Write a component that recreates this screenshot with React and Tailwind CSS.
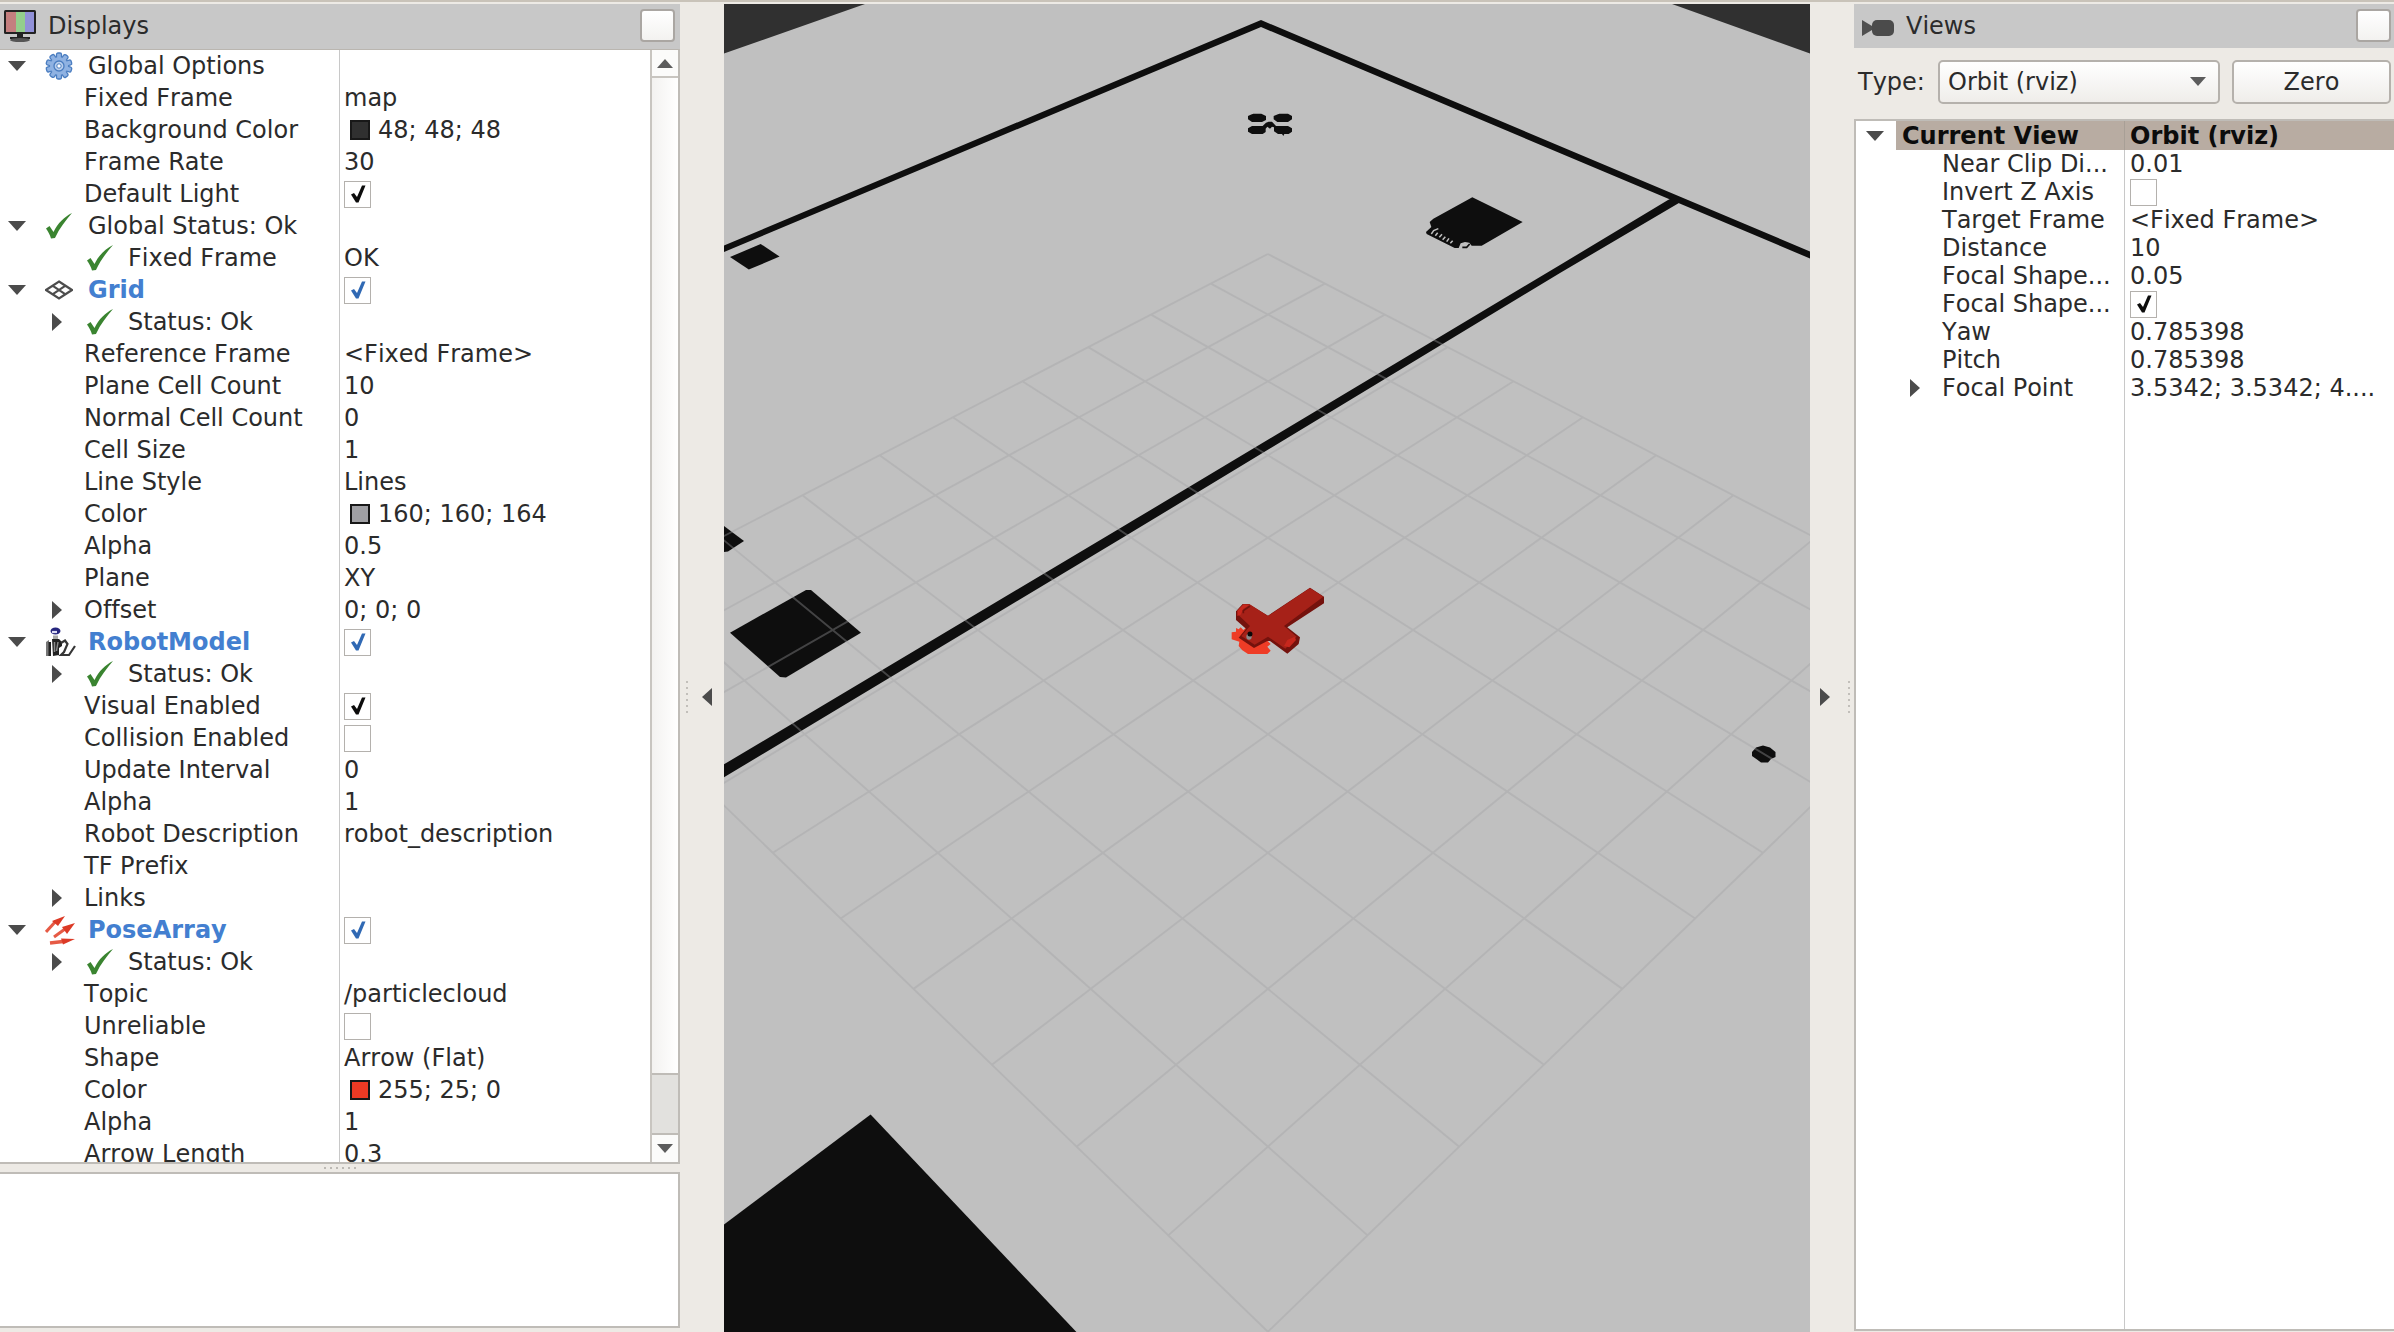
import React from "react";

const CX = 1267.9;
function project(i, j) {
  const s = (i + j) / 2;
  const w = 1 - 0.046416 * s;
  return [CX + (55.7 * (i - j)) / w, (254 + 45.96 * s) / w];
}

const steps = Array.from({ length: 11 }, (_, n) => n);

function GridLines() {
  const d = steps
    .map((n) => {
      const [ax, ay] = project(n, 0);
      const [bx, by] = project(n, 10);
      const [cx, cy] = project(0, n);
      const [dx, dy] = project(10, n);
      return `M${ax} ${ay}L${bx} ${by}M${cx} ${cy}L${dx} ${dy}`;
    })
    .join("");
  return <path d={d} fill="none" stroke="#a0a0a4" strokeOpacity="0.37" strokeWidth="1.9" />;
}

function Scene() {
  return (
    <svg className="block h-[1328px] w-[1086px] shrink-0 bg-[#c0c0c0]" viewBox="724 4 1086 1328">
      <path d="M724 4H865L724 53.5ZM1672 4H1810V53.5Z" fill="#303030" />
      <g fill="#0e0e0e">
        <path d="M1261 20L724 245.5V252L1261 27L1810 258.5V251.5Z" />
        <path d="M1668 200L1560 265L1120 528.3L724 764.3V777.3L1120 539.3L1560 273L1684 200L1676 196Z" />
        <path d="M730 257L760.7 244L779.6 256.6L748.8 269.5Z" />
        <path d="M724 526L744 541L728 551.5L724 552Z" />
        <path d="M730 632.7L806 590L811 590L861 632.7L786 677.5L780 677Z" />
        <path d="M870.6 1114.6L724 1224.6V1332H1076.4Z" />
        <path d="M1752 752L1756 747.500L1763 745.500L1770 747.500L1775.500 752V757L1771 759L1768 762.500H1761L1757 759.500L1752 756Z" />
      </g>
      <g transform="translate(1220 80) scale(.33333)">
        <g fill="#0e0e0e">
          <path d="M92 104L100 101H124L138 108V120L126 126H96L84 118V108ZM170 104L178 101H204L216 108V118L204 126H172L161 118V108Z" />
          <path d="M84 145L96 138H128L138 128L146 125H156L168 138H204L216 145V155L206 162H193L190 168L186 162H174L162 154V142L156 140L150 146L142 140L137 146V156L128 162H96L84 155Z" />
          <path d="M757 352L908 426L785 497H755L748 488L735 486L722 490L716 504H704L620 462L618 456L634 441L629 426L640 416Z" />
        </g>
        <path d="M634 462L641 452L655 446M646 467L653 458M658 472L666 463M668 479L676 470M680 485L687 475M691 490L698 482" fill="none" stroke="#c0c0c0" strokeWidth="4.500" />
        <path d="M727 502H740L749 492" fill="none" stroke="#0e0e0e" strokeWidth="5" />
      </g>
      <GridLines />
      <g transform="translate(1180 540) scale(.33333)">
        <path d="M155 277L168 275V264L176 268L182 262L190 270L200 262L230 270L272 312L262 320L272 332L262 342H204L186 330L176 318L178 305L155 298Z" fill="#ee3c26" />
        <path d="M168 214L188 192H206L264 227L390 143L432 170V190L322 262L360 292L356 312L322 341L270 303H262L222 324L176 293L198 266L168 240Z" fill="#74120d" />
        <path d="M172 212L190 192H208L264 228L390 144L430 170L312 258L350 290L316 326L264 290L224 314L184 288L210 258L176 226Z" fill="#a62118" />
        <path d="M172 228V212L190 194L208 196L190 206L182 224Z" fill="#c6271d" />
        <path d="M190 220V212L210 198" fill="none" stroke="#74120d" strokeWidth="5" />
        <path d="M312 318L322 300L344 290L348 300L328 322Z" fill="#c6271d" />
        <ellipse cx="207" cy="290" rx="8" ry="9" fill="#8a8a8a" />
        <circle cx="210" cy="282" r="7.5" fill="#080808" />
      </g>
    </svg>
  );
}

function DownArrow() {
  return (
    <svg className="h-[10px] w-[18px]" viewBox="0 0 18 10">
      <path d="M0 0H18L9 10Z" fill="#4b4b4b" />
    </svg>
  );
}

function RightArrow() {
  return (
    <svg className="h-[18px] w-[10px]" viewBox="0 0 10 18">
      <path d="M0 0V18L10 9Z" fill="#4b4b4b" />
    </svg>
  );
}

function OkIcon() {
  return (
    <svg className="h-[28px] w-[28px]" viewBox="0 0 28 28">
      <path d="M1 16.500L4.500 14L8.500 20C13 11 19 5 27 1C21 8 14.500 16 10 26L6 26.500C5 23 3 19 1 16.500Z" fill="#3a8430" />
    </svg>
  );
}

const teeth = Array.from({ length: 10 }, (_, n) => n * 36);

function GearIcon() {
  return (
    <svg className="h-[28px] w-[28px]" viewBox="0 0 28 28">
      {teeth.map((a) => (
        <rect key={a} x="11.500" y="1" width="5" height="6" rx="1.500" fill="#8fb2e2" stroke="#4a7dc0" strokeWidth="1.300" transform={`rotate(${a} 14 14)`} />
      ))}
      <circle cx="14" cy="14" r="9" fill="#8fb2e2" />
      <circle cx="14" cy="14" r="5" fill="#b9cfed" stroke="#4a7dc0" strokeWidth="1.300" />
      <circle cx="14" cy="14" r="2.200" fill="#fff" stroke="#4a7dc0" strokeWidth="1" />
    </svg>
  );
}

function GridIcon() {
  return (
    <svg className="h-[28px] w-[28px]" viewBox="0 0 28 28">
      <path d="M14 5.500L27 14L14 22.500L1 14ZM7.500 9.700L20.500 18.300M20.500 9.700L7.500 18.300" fill="none" stroke="#4d4d4d" strokeWidth="2.200" />
    </svg>
  );
}

function RobotIcon() {
  return (
    <svg className="h-[31px] w-[31px]" viewBox="0 0 31 31">
      <ellipse cx="10.500" cy="4" rx="5" ry="3.500" fill="#26267e" />
      <path d="M7 5H12" stroke="#dcdcf4" strokeWidth="2.200" />
      <path d="M8 8.500H13V13H8Z" fill="#a8a8a8" />
      <path d="M1 15L4 13V29H1Z" fill="#777" />
      <path d="M3.500 15H6V29H3.500ZM7 12H14L17 15V19L14 21V28L8 29Z" fill="#222" />
      <path d="M9.500 15V25M13 15L11.500 24" stroke="#8a8a8a" strokeWidth="1.500" />
      <path d="M16 16L20 13.500L22.500 17L19 25L16 28H24L30 19" fill="none" stroke="#363636" strokeWidth="2.200" />
    </svg>
  );
}

function PoseIcon() {
  return (
    <svg className="h-[31px] w-[31px]" viewBox="0 0 31 31">
      <path d="M1 17L11 6" stroke="#e65a45" strokeWidth="3" />
      <path d="M7 6L20 1L13 11Z" fill="#dc3a26" />
      <path d="M9 22L20 14" stroke="#e65a45" strokeWidth="3" />
      <path d="M17 12L30 8L22 19Z" fill="#dc3a26" />
      <path d="M5 28L18 26.500" stroke="#e65a45" strokeWidth="3.500" />
      <path d="M16 23.500L30 24L18 29.500Z" fill="#dc3a26" />
    </svg>
  );
}

function MonitorIcon() {
  return (
    <svg className="h-[34px] w-[32px]" viewBox="0 0 32 34">
      <rect x="0" y="1" width="32" height="24" rx="1.500" fill="#222" />
      <path d="M2 3H12V23H2Z" fill="#c47f7f" />
      <path d="M12 3H21V23H12Z" fill="#93cf8c" />
      <path d="M21 3H30V23H21Z" fill="#9191d8" />
      <path d="M13 25H19V28H26V30H6V28H13Z" fill="#222" />
      <ellipse cx="16" cy="31" rx="10" ry="2" fill="#555" />
    </svg>
  );
}

function CameraIcon() {
  return (
    <svg className="h-[18px] w-[33px]" viewBox="0 0 33 18">
      <path d="M0 1L10 7V11L0 17Z" fill="#4f4f4f" />
      <rect x="10" y="1" width="22" height="16" rx="5" fill="#4b4b4b" />
    </svg>
  );
}

function Check({ on, blue }) {
  return (
    <span className="flex size-[27px] shrink-0 items-center justify-center border-[1.5px] border-[#b4b1ad] bg-white">
      {on && (
        <svg className="size-[20px]" viewBox="0 0 20 20">
          <path d="M3 10.500L6 9L9 13L14 1.500H17.500L10.500 18.500H8Z" fill={blue ? "#3069b4" : "#0c0c0c"} />
        </svg>
      )}
    </span>
  );
}

const icons = { gear: GearIcon, ok: OkIcon, grid: GridIcon, robot: RobotIcon, pose: PoseIcon };

const rows = [
  { k: "top", icon: "gear", label: "Global Options" },
  { label: "Fixed Frame", value: "map" },
  { label: "Background Color", swatch: "bg-[#303030]", value: "48; 48; 48" },
  { label: "Frame Rate", value: "30" },
  { label: "Default Light", check: true },
  { k: "top", icon: "ok", label: "Global Status: Ok" },
  { k: "status", label: "Fixed Frame", value: "OK" },
  { k: "top", icon: "grid", label: "Grid", blue: true, check: true },
  { k: "status", arrow: true, label: "Status: Ok" },
  { label: "Reference Frame", value: "<Fixed Frame>" },
  { label: "Plane Cell Count", value: "10" },
  { label: "Normal Cell Count", value: "0" },
  { label: "Cell Size", value: "1" },
  { label: "Line Style", value: "Lines" },
  { label: "Color", swatch: "bg-[#a0a0a4]", value: "160; 160; 164" },
  { label: "Alpha", value: "0.5" },
  { label: "Plane", value: "XY" },
  { arrow: true, label: "Offset", value: "0; 0; 0" },
  { k: "top", icon: "robot", label: "RobotModel", blue: true, check: true },
  { k: "status", arrow: true, label: "Status: Ok" },
  { label: "Visual Enabled", check: true },
  { label: "Collision Enabled", check: false },
  { label: "Update Interval", value: "0" },
  { label: "Alpha", value: "1" },
  { label: "Robot Description", value: "robot_description" },
  { label: "TF Prefix" },
  { arrow: true, label: "Links" },
  { k: "top", icon: "pose", label: "PoseArray", blue: true, check: true },
  { k: "status", arrow: true, label: "Status: Ok" },
  { label: "Topic", value: "/particlecloud" },
  { label: "Unreliable", check: false },
  { label: "Shape", value: "Arrow (Flat)" },
  { label: "Color", swatch: "bg-[#ee3a24]", value: "255; 25; 0" },
  { label: "Alpha", value: "1" },
  { label: "Arrow Length", value: "0.3" },
];

function DisplayRow({ row }) {
  const Icon = icons[row.icon];
  return (
    <div className="flex h-8 shrink-0 items-center">
      <div className="flex h-full w-[340px] shrink-0 items-center border-r border-[#c8c8c8]">
        {row.k === "top" ? (
          <>
            <span className="flex w-[45px] shrink-0 pl-2"><DownArrow /></span>
            <span className="flex w-[43px] shrink-0"><Icon /></span>
          </>
        ) : (
          <>
            <span className="flex w-[84px] shrink-0 pl-[52px]">{row.arrow && <RightArrow />}</span>
            {row.k === "status" && <span className="flex w-[44px] shrink-0 pl-[2px]"><OkIcon /></span>}
          </>
        )}
        <span className={row.blue ? "font-bold text-[#437fd0]" : ""}>{row.label}</span>
      </div>
      <div className="flex items-center pl-1">
        {row.swatch && <span className={`mr-2 ml-[6px] size-5 border-2 border-[#181818] ${row.swatch}`} />}
        {row.check !== undefined && <Check on={row.check} blue={row.blue} />}
        {row.value}
      </div>
    </div>
  );
}

function FloatButton() {
  return <span className="mb-[2px] h-[33px] w-[35px] rounded-[4px] border-2 border-[#aaa6a2] bg-linear-to-b from-white to-[#f3f2f0]" />;
}

function Displays() {
  return (
    <div className="flex w-[680px] shrink-0 flex-col">
      <div className="flex h-[45px] shrink-0 items-center bg-[#c8c8c8] pr-[5px] pl-1">
        <span className="mb-[2px]"><MonitorIcon /></span>
        <span className="mb-[2px] ml-[12px] flex-1">Displays</span>
        <FloatButton />
      </div>
      <div className="flex h-[1115px] shrink-0 overflow-hidden border-t border-r-2 border-b-2 border-t-[#bab6b0] border-r-[#bfbcb7] border-b-[#bfbcb7] bg-white">
        <div className="flex flex-1 flex-col overflow-hidden">
          {rows.map((row, n) => <DisplayRow key={n} row={row} />)}
        </div>
        <div className="flex w-[28px] shrink-0 flex-col border-l-2 border-[#c8c5c0] bg-linear-to-r from-[#f3f2f0] to-white">
          <div className="flex h-[28px] items-center justify-center border-b-2 border-[#c8c5c0] bg-[#fbfbfa]">
            <svg className="h-[9px] w-4" viewBox="0 0 16 9"><path d="M0 9H16L8 0Z" fill="#5c5c5c" /></svg>
          </div>
          <div className="flex-1" />
          <div className="h-[62px] border-y-2 border-[#bfbcb7] bg-[#e2e1de]" />
          <div className="flex h-[27px] items-center justify-center bg-[#fbfbfa]">
            <svg className="h-[9px] w-4" viewBox="0 0 16 9"><path d="M0 0H16L8 9Z" fill="#5c5c5c" /></svg>
          </div>
        </div>
      </div>
      <div className="flex h-[8px] shrink-0 items-center justify-center gap-1">
        {[0, 1, 2, 3, 4, 5].map((n) => <span key={n} className="size-[2px] bg-[#bcb9b4]" />)}
      </div>
      <div className="h-[156px] shrink-0 border-2 border-l-0 border-[#bfbcb7] bg-white" />
    </div>
  );
}

function Dots() {
  return (
    <div className="flex flex-col gap-1">
      {[0, 1, 2, 3, 4, 5].map((n) => <span key={n} className="size-[2px] bg-[#c2bfba]" />)}
    </div>
  );
}

const viewRows = [
  { label: "Near Clip Di...", value: "0.01" },
  { label: "Invert Z Axis", check: false },
  { label: "Target Frame", value: "<Fixed Frame>" },
  { label: "Distance", value: "10" },
  { label: "Focal Shape...", value: "0.05" },
  { label: "Focal Shape...", check: true },
  { label: "Yaw", value: "0.785398" },
  { label: "Pitch", value: "0.785398" },
  { arrow: true, label: "Focal Point", value: "3.5342; 3.5342; 4...." },
];

function Views() {
  return (
    <div className="flex w-[540px] shrink-0 flex-col">
      <div className="flex h-[44px] shrink-0 items-center bg-[#c8c8c8] pr-[3px] pl-2">
        <span className="mt-[3px]"><CameraIcon /></span>
        <span className="mb-px ml-[11px] flex-1">Views</span>
        <FloatButton />
      </div>
      <div className="flex h-[71px] shrink-0 items-center pr-[3px] pb-[4px] pl-1">
        <span className="w-[80px]">Type:</span>
        <div className="flex h-[44px] w-[282px] items-center justify-between rounded-[5px] border-2 border-[#b5b1ac] bg-linear-to-b from-white to-[#efedea] pr-3 pl-2">
          Orbit (rviz)
          <svg className="h-[9px] w-4" viewBox="0 0 16 9"><path d="M0 0H16L8 9Z" fill="#5c5c5c" /></svg>
        </div>
        <div className="ml-3 flex h-[44px] flex-1 items-center justify-center rounded-[5px] border-2 border-[#b5b1ac] bg-linear-to-b from-white to-[#efedea]">Zero</div>
      </div>
      <div className="flex h-[1212px] shrink-0 flex-col border-t-2 border-b-2 border-l-2 border-[#bfbcb7] bg-white">
        <div className="flex h-[29px] shrink-0 items-center font-bold text-[#0c0c0c]">
          <span className="flex w-[40px] shrink-0 pl-[10px]"><DownArrow /></span>
          <div className="flex h-full w-[229px] shrink-0 items-center border-r border-[#a89f96] bg-[#b8aca2] pl-[6px]">Current View</div>
          <div className="flex h-full flex-1 items-center bg-[#b8aca2] pl-[5px]">Orbit (rviz)</div>
        </div>
        {viewRows.map((row, n) => (
          <div key={n} className="flex h-7 shrink-0 items-center">
            <div className="flex h-full w-[269px] shrink-0 items-center border-r border-[#c8c8c8]">
              <span className="flex w-[86px] shrink-0 pl-[54px]">{row.arrow && <RightArrow />}</span>
              <span>{row.label}</span>
            </div>
            <div className="flex items-center pl-[5px]">
              {row.check !== undefined && <Check on={row.check} />}
              {row.value}
            </div>
          </div>
        ))}
        <div className="w-[269px] flex-1 border-r border-[#c8c8c8]" />
      </div>
    </div>
  );
}

export default function App() {
  return (
    <div className="flex h-[1332px] w-[2394px] flex-col overflow-hidden bg-[#edeae5] font-['DejaVu_Sans',sans-serif] text-[24px] leading-none whitespace-nowrap text-[#2b2b2b] [font-kerning:none] [font-variant-ligatures:none]">
      <div className="h-[2px] shrink-0 bg-[#c9c3b9]" />
      <div className="mt-[2px] flex h-[1328px] shrink-0">
        <Displays />
        <div className="flex w-[44px] shrink-0 items-center pl-[6px]">
          <div className="flex items-center gap-[14px] pt-[58px]">
            <Dots />
            <svg className="h-[18px] w-[10px]" viewBox="0 0 10 18"><path d="M10 0V18L0 9Z" fill="#4b4b4b" /></svg>
          </div>
        </div>
        <Scene />
        <div className="flex w-[44px] shrink-0 items-center pl-[10px]">
          <div className="flex items-center gap-[18px] pt-[58px]">
            <RightArrow />
            <Dots />
          </div>
        </div>
        <Views />
      </div>
    </div>
  );
}
